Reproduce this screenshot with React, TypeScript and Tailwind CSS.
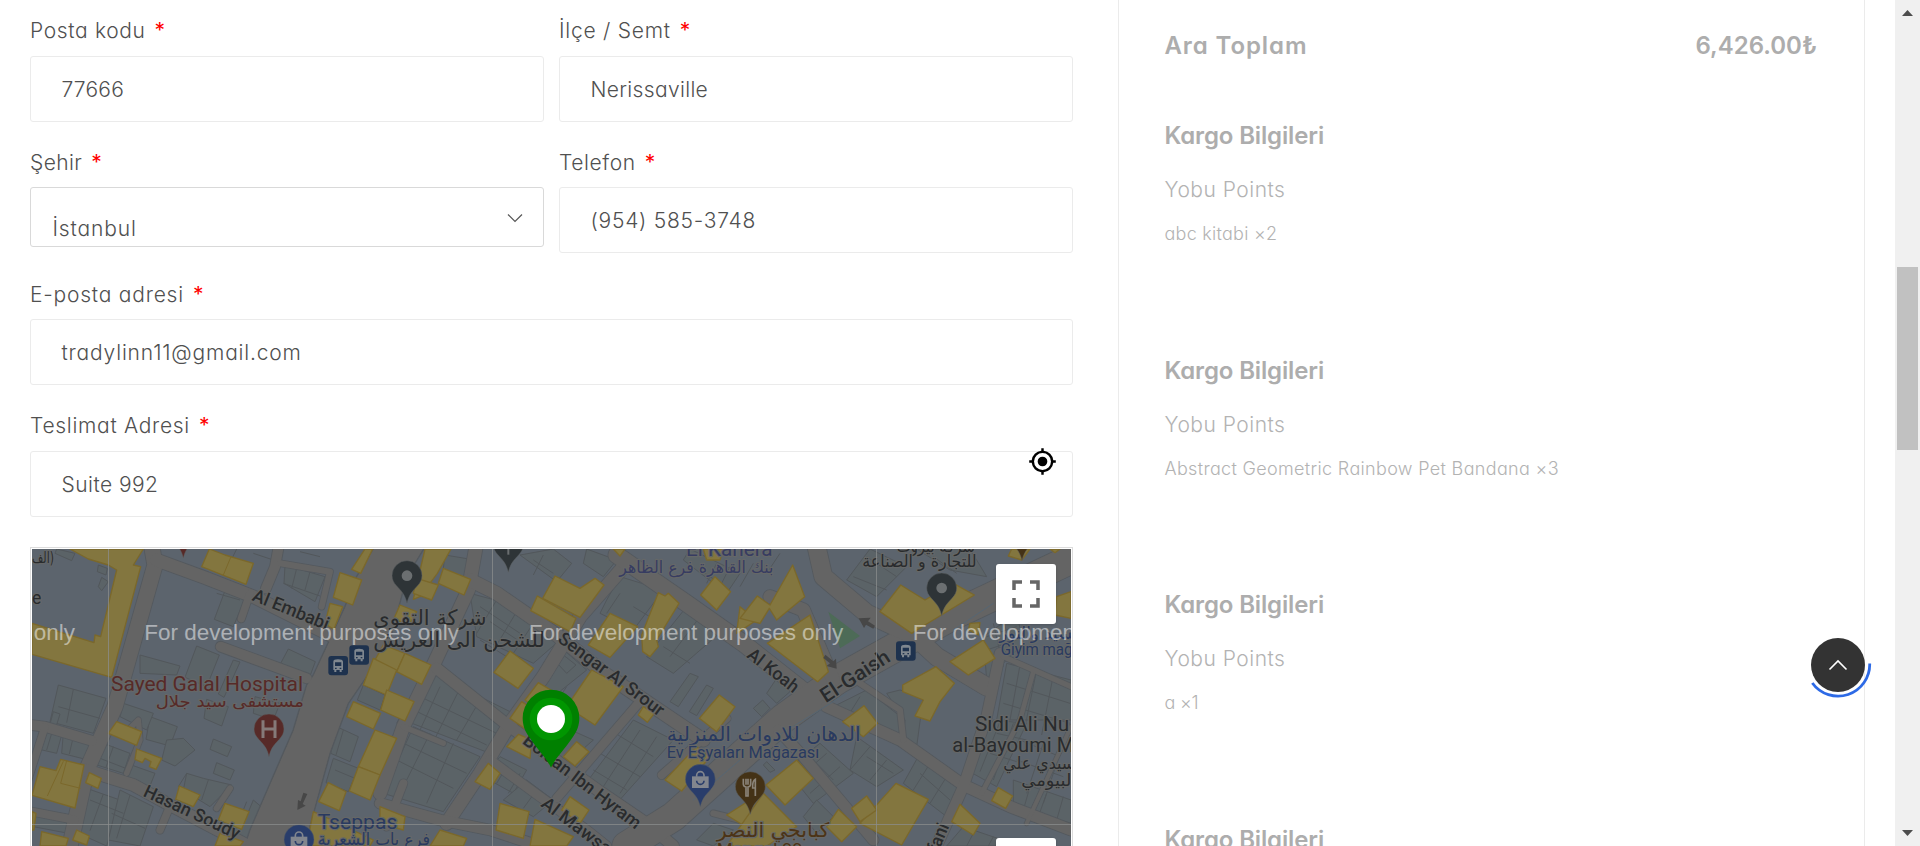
import type { ReactNode } from "react";

function Required() {
  return <span className="ml-[9px] font-normal text-[#ff0000]">*</span>;
}

function Field({ label, labelClass, value, valueClass, select, children }: {
  label: string; labelClass: string; value: string; valueClass: string; select?: boolean; children?: ReactNode;
}) {
  return (
    <div className="flex h-[131.66px] flex-1 flex-col">
      <label className="h-11 shrink-0 whitespace-nowrap pt-[4.5px] leading-[30px]">
        <span className={labelClass}>{label}</span>
        <Required />
      </label>
      {select ? (
        <div className="flex h-[60px] items-center justify-between rounded-[3px] border border-[#d9d9d9] pl-[21.5px] pr-[20px]">
          <span className={"pt-[24px] leading-[30px] " + valueClass}>{value}</span>
          <svg className="mt-0.5 h-3 w-4" viewBox="0 0 16 12" fill="none" stroke="#555" strokeWidth="1.2">
            <path d="M1 2.5 8 9.5 15 2.5" />
          </svg>
        </div>
      ) : (
        <div className="relative flex h-[66px] shrink-0 items-center rounded-[3px] border border-[#ebebeb] pl-[30.5px]">
          <span className={"pt-[2px] leading-[30px] " + valueClass}>{value}</span>
          {children}
        </div>
      )}
    </div>
  );
}

const YELLOW = [
  "150,27 370,27 340,75 362,80 275,412 36,343 36,250 222,308 225,285 242,290 290,90 265,75 205,57",
  "568,27 615,45 700,70 678,133 545,80", "1035,27 1058,27 1022,100 995,88", "960,98 1025,120 998,195 940,172", "930,190 968,200 942,268 915,252",
  "290,545 365,575 350,616 265,580", "350,627 425,655 408,688 388,680 393,665 375,655 367,668 345,658",
  "60,680 108,692 122,658 192,675 165,804 36,766", "208,698 244,715 234,745 197,728", "478,738 540,765 520,800 467,778",
  "615,790 687,815 665,868 595,840", "925,728 978,755 958,812 896,785", "1000,485 1082,520 1060,567 980,530", "1065,570 1130,595 1080,705 1015,680",
  "1015,680 1080,705 1050,780 988,753", "36,815 48,820 42,870 36,870", "65,875 145,895 138,918 60,918", "170,870 208,888 200,915 158,900", "600,880 670,905 660,918 585,918",
  "880,815 935,840 1060,900 1050,918 860,918",
  "1215,27 1293,27 1252,100 1200,170 1180,178", "1270,85 1352,118 1332,165 1255,130", "1190,115 1255,135 1235,180 1180,160", "1140,195 1190,215 1170,250 1120,240",
  "1090,315 1155,340 1130,395 1065,360", "1155,340 1233,375 1205,433 1130,395", "1060,355 1130,390 1100,465 1030,435", "1100,450 1182,485 1155,543 1082,510",
  "1470,333 1540,385 1494,445 1422,397", "1555,428 1610,460 1560,515 1515,480", "1505,485 1560,520 1535,580 1470,535", "1496,583 1535,600 1530,655 1460,620",
  "1605,108 1680,145 1725,115 1752,135 1680,232 1568,175", "1552,168 1668,235 1650,275 1532,212", "1770,220 1853,260 1770,352 1705,315",
  "1915,158 1935,168 1945,160 1977,190 1910,300 1915,320 1890,350 1868,335 1865,285", "1715,390 1810,440 1725,555 1640,500", "1670,605 1707,635 1665,678 1630,650",
  "1870,500 1903,520 1882,547 1855,525", "2098,465 2145,500 2090,575 2038,535", "2085,110 2132,155 2090,210 2042,165", "2160,200 2210,240 2150,280",
  "1440,790 1527,815 1510,895 1428,870", "1545,838 1660,890 1640,918 1530,918", "1650,770 1707,810 1680,850 1625,810", "1405,670 1440,700 1410,748 1365,725",
  "2010,640 2030,620 2070,650 1985,753 1935,720", "2120,825 2190,780 2220,870 2160,918 2240,900", "1080,800 1155,830 1150,870 1080,850", "1260,870 1340,895 1330,918 1230,918", "1780,27 1815,27 1800,48", "2050,27 2110,27 2100,60 2060,60",
  "2318,75 2354,170 2270,240 2248,205 2220,250 2160,235 2212,168 2250,195", "2370,225 2425,395 2393,425 2242,310",
  "2642,135 2715,180 2800,130 2863,165 2715,255 2675,280 2580,215", "2890,300 2925,355 2845,405 2790,365", "2748,380 2803,430 2760,485 2730,543 2685,528 2710,480 2648,455 2648,435",
  "2532,497 2573,550 2530,590 2468,545", "2330,660 2380,715 2295,795 2238,735", "2230,760 2330,860 2240,918 2120,918", "2628,730 2725,778 2645,915 2520,850",
  "2540,768 2570,810 2520,845 2495,805", "2455,808 2510,860 2465,905 2420,860", "2935,743 2978,768 2957,805 2915,782", "2820,793 2880,850 2860,885 2795,845",
  "3110,170 3153,155 3153,235 3105,225", "2975,27 3030,27 3005,60 2965,48", "3090,27 3120,27 3105,38", "2850,250 2880,248 2875,285 2845,270",
];

// Building footprints inside the blocks.
const GREY = [
  "115,435 258,475 220,580 90,545", "100,515 120,522 105,570 88,560", "235,75 262,85 258,105 232,95", "245,112 265,125 245,152 235,140",
  "360,345 480,378 470,405 360,400", "530,318 598,345 560,440 495,412", "640,360 660,366 612,472 595,462", "615,152 675,175 640,260 583,238", "795,75 915,110 885,185 792,130",
  "805,327 886,365 870,408 782,370", "390,530 472,560 450,618 378,598", "440,600 490,595 525,630 465,678 425,660", "580,597 635,620 622,650 570,628", "590,668 643,690 630,720 580,700",
  "310,490 400,520 380,570 300,530", "560,478 625,500 605,558 552,535", "705,470 780,490 760,540 700,520", "320,670 405,700 385,750 310,720", "500,700 550,715 635,735 570,800 490,750",
  "130,580 225,610 205,660 125,640", "60,570 125,585 110,640 45,625", "250,610 330,640 310,700 215,670", "200,745 300,780 260,918 175,880", "300,750 400,800 360,918 265,900", "50,820 150,835 145,880 40,860", "110,27 165,40 155,62 105,40", "950,560 1015,590 990,665 932,640", "940,655 1015,685 985,755 918,728", "1030,435 1095,465 1080,510 1012,480", "700,780 735,810 700,918 650,900",
  "1275,45 1365,60 1370,130 1270,85", "1240,400 1340,450 1500,530 1410,640 1150,540", "1180,560 1380,650 1270,815 1090,760", "1350,160 1500,200 1620,300 1540,370 1370,290", "1500,45 1600,27 1655,70 1610,125", "1700,27 1790,60 1750,110 1690,70",
  "1620,320 1700,390 1600,470 1560,440", "1630,560 1720,600 1640,670 1600,630", "1840,540 1960,600 1790,790 1690,740", "1760,180 1800,110 1930,150 1840,270 1740,220", "2000,200 2110,270 1960,400 1880,350", "2010,400 2035,410 1975,500 1950,485", "2060,435 2080,445 2030,527 2008,515", "1440,650 1520,690 1480,760 1390,710", "1520,720 1600,780 1540,830 1450,780", "2010,27 2160,100 2120,160 1990,60", "1630,345 1668,375 1640,400 1612,370",
  "2270,415 2310,455 2270,490 2240,460", "2228,480 2250,505 2225,530 2200,505", "2480,120 2550,27 2660,80 2570,170", "2690,27 2850,27 2900,110 2790,90", "2440,500 2540,450 2680,560 2640,620", "2600,460 2640,450 2710,470 2690,620 2650,600 2655,540", "2400,610 2500,700 2380,790 2300,690", "2510,590 2650,690 2570,740 2490,690", "2700,640 2830,750 2780,830 2650,730",
  "2960,370 3153,420 3153,540 2930,540", "2920,540 3020,550 2930,740 2840,690", "2980,720 3153,780 3153,850 2980,800", "2890,290 2990,220 3010,310 2900,420", "2240,665 2265,690 2250,697 2230,675", "2830,860 3000,918 2780,918", "2080,850 2140,870 2080,918 2030,900", "2390,780 2440,830 2390,880 2350,830",
];

// Lot dividers, drawn as thin lines across footprints.
const LOTS =
  "M160 590l-12 52M95 580l-15 50M160 448l-20 100M115 500l125 35M240 655l90 35M280 620l-22 62M210 780l100 40M250 762l-40 110M330 765l-40 130M275 820l100 45M790 130l110 38M830 85l-15 60M870 95l-15 55M700 40l60 20M650 27l-15 30M840 35l60 15M590 160l70 20M500 700l-25 40M565 720l-20 60M680 785l-40 100M970 570l-22 75M945 690l60 25" +
  "M1200 420l-70 130M1260 440l-60 130M1320 445l-80 160M1190 465l240 115M1160 500l240 115M1380 480l-70 120M1130 600l210 100M1110 650l190 95M1230 580l-90 180M1300 610l-80 180M1380 200l120 80M1430 180l-60 100M1490 215l-60 100M1540 250l-60 90M1410 245l120 80M1640 440l-40 60M1770 570l130 80M1740 640l120 70M1720 690l100 60M1860 570l-110 170M1910 590l-110 170M1840 200l90 55M1800 160l-40 60M2040 230l-90 120M1930 320l80 50M1460 680l-30 50M1500 700l-35 60M1550 750l-40 55M1620 260l60 60M1290 110l80 35M1540 60l60 40M1570 45l-30 60M2040 90l60 40M2090 70l-30 60M2130 80l-30 60M1380 300l80 50" +
  "M2200 70l-40 70M2240 100l40 -60M2500 110l100 40M2540 50l90 60M2740 50l70 50M2480 520l60 50M2520 470l-50 80M2360 640l80 80M2420 640l-80 70M2460 680l-90 80M2550 620l-60 70M2600 660l-50 60M2540 650l80 50M2730 670l-50 80M2780 710l-50 80M2700 700l90 80M3000 375l-30 165M3050 390l-35 170M3100 405l-35 180M2960 430l190 60M2950 490l200 60M2930 580l90 20M2910 640l80 25M2940 545l-60 150M2980 550l-60 170M3030 740l-20 70M3080 760l-25 70M3130 770l-20 70M3000 600l120 50M2990 660l140 50M3070 610l-50 150M3130 610l-60 180M2920 250l30 130M2950 240l25 90M2900 290l90 -30M2900 330l90 -30M2860 880l-20 38M2920 890l-15 28";

const ROADS: [string, number][] = [
  ["M392 0 405 75 285 500 200 690 150 918", 46], ["M410 60 560 115 700 170 940 290", 38], ["M602 320 860 415", 30], ["M776 20 765 80 738 145", 30],
  ["M690 160 664 236", 22], ["M780 70 930 95 905 200", 18], ["M20 553 75 560 215 602", 30], ["M190 688 340 735 450 795 680 915", 36], ["M75 560 20 730", 22],
  ["M630 745 590 805", 18], ["M445 810 420 870", 22], ["M20 812 165 840", 24], ["M310 585 355 540 360 600 320 700", 16],
  ["M1370 10 1345 150 1240 375 1150 560 1080 760", 40], ["M1350 120 1430 160 1610 285 1760 405 1990 560 2050 600", 40], ["M1820 70 1680 230 1570 410 1470 550 1380 700 1280 850", 40],
  ["M1250 385 1450 545 1600 655 1740 755 1880 850 1960 918", 34], ["M1150 560 1270 610", 16], ["M1410 660 1560 770 1700 870 1760 918", 28], ["M1855 490 1610 775", 26],
  ["M1080 790 1260 840 1410 870 1610 935", 32], ["M1790 45 2000 190 2170 310 2360 460", 50], ["M1150 730 1100 860", 24], ["M2120 535 1925 705", 24],
  ["M1820 918 1960 830 2160 650 2290 535 2450 420 2800 225 3170 50", 86], ["M2385 0 2410 110 2540 220 2680 285 2750 350 2900 440", 54], ["M2250 170 2350 210 2440 420", 40],
  ["M2275 570 2350 650 2560 900", 32], ["M2420 500 2640 600 2830 735 2970 800 3153 870", 34], ["M2940 340 2900 530 2830 740 2740 940", 32], ["M3040 395 3000 540 2885 760", 14], ["M2950 350 3153 440", 16], ["M2520 430 2640 510 2650 600", 18],
  ["M2080 820 2160 840 2240 918", 18], ["M3153 560 3020 850", 12],
];

function MapText({ x, y, w, size, angle = 0, color = "#292b2d", bold, arabic, children }: {
  x: number; y: number; w: number; size: number; angle?: number; color?: string; bold?: boolean; arabic?: boolean; children: string;
}) {
  return (
    <text
      transform={`translate(${x} ${y}) rotate(${angle})`} fontSize={size} textLength={w} lengthAdjust="spacingAndGlyphs"
      fill={color} stroke="#656767" strokeWidth="7" strokeLinejoin="round" paintOrder="stroke" fontWeight={bold ? 500 : 400}
      className={arabic ? "font-['DejaVu_Sans',sans-serif]" : "font-[Roboto,sans-serif]"}
    >
      {children}
    </text>
  );
}

function Pin({ x, y, color, children }: { x: number; y: number; color: string; children?: ReactNode }) {
  return (
    <g transform={`translate(${x} ${y})`}>
      <path d="M0 83C-6 56-18 45-31 31-40 21-45 12-45 0A45 45 0 0 1 45 0C45 12 40 21 31 31 18 45 6 56 0 83Z" fill={color} stroke="#5f6264" strokeWidth="1.5" />
      {children}
    </g>
  );
}

function Bag() {
  return (
    <g>
      <path d="M-25-9H25V26H-25Z" fill="#82868e" />
      <path d="M-11-8V-12A11 11 0 0 1 11-12V-8" fill="none" stroke="#82868e" strokeWidth="5" />
      <path d="M-11 4A11 11 0 0 0 11 4" fill="none" stroke="#293d6b" strokeWidth="5" />
    </g>
  );
}

function Fork() {
  return (
    <path d="M-21-24V-8Q-21-1-13 1V28H-7V1Q1-1 1-8V-24M-13-24V-6M-7-24V-6M15 28V-22Q6-18 7 4H16" fill="none" stroke="#8b8479" strokeWidth="5" />
  );
}

function Bus({ x, y }: { x: number; y: number }) {
  return (
    <g transform={`translate(${x} ${y})`}>
      <rect width="59" height="58" rx="9" fill="#1e324e" />
      <path d="M15 17Q15 10 29 10T44 17V42H40V48H34V42H24V48H18V42H15Z" fill="#7f878f" />
      <path d="M20 19H39V30H20ZM20 35H25V39H20ZM34 35H39V39H34Z" fill="#1e324e" />
    </g>
  );
}

function MapCanvas() {
  return (
    <svg className="block h-[297px] w-[1039px]" viewBox="36 27 3117 891" preserveAspectRatio="none">
      <rect x="36" y="27" width="3117" height="891" fill="#5c646d" />
      <g fill="#5b6367" stroke="#52575b" strokeWidth="3">
        {GREY.map((p) => <polygon key={p} points={p} />)}
        <path d={LOTS} fill="none" />
      </g>
      <g fill="none" strokeLinejoin="round" strokeLinecap="round">
        <path d="M1065 20 1010 110 975 200 880 405 860 435 820 570 690 870 670 930H850L930 640 985 490 1060 380 1110 300 1160 110 1215 20Z" fill="#646464" stroke="#54595e" strokeWidth="5" />
        {ROADS.map(([d, w]) => <path key={d} d={d} stroke="#54595e" strokeWidth={w + 5} />)}
        {ROADS.map(([d, w]) => <path key={d} d={d} stroke="#646464" strokeWidth={w} />)}
        <path d="M1066 20 1012 110 977 200 882 405 862 435 822 570 692 870 672 930H848L928 640 983 490 1058 380 1108 300 1158 110 1213 20Z" fill="#646464" />
        <path d="M2020 780 2160 660M2270 590 2480 460M2800 270 2920 190" stroke="#566673" strokeWidth="3" />
      </g>
      <path d="M2425 215 2520 288 2460 325Z" fill="#4d6b57" />
      <g fill="#83763f" stroke="#7b682b" strokeWidth="4" strokeLinejoin="round">
        {YELLOW.map((p) => <polygon key={p} points={p} />)}
      </g>
      <path d="M140 662 122 730 182 745M130 664 82 768M633 50 610 105" fill="none" stroke="#7b682b" strokeWidth="3" />
      <g fill="#474747">
        <path d="M850 758 862 762 848 792 857 797 832 810 834 780 842 784Z" />
        <path d="M2516 235 2552 233 2544 244 2565 257 2560 266 2538 254 2532 264Z" />
        <path d="M2416 344 2440 364 2448 356 2450 386 2420 378 2430 370 2410 354Z" />
      </g>

      <MapText x={36} y={70} w={66} size={46} arabic>{"\u200f(الف"}</MapText>
      <MapText x={36} y={192} w={28} size={56}>e</MapText>
      <MapText x={694} y={180} w={242} size={54} angle={22} bold>Al Embabi</MapText>
      <MapText x={367} y={767} w={312} size={54} angle={25} bold>Hasan Soudy</MapText>
      <MapText x={273} y={453} w={576} size={63} color="#572a28">Sayed Galal Hospital</MapText>
      <MapText x={407} y={501} w={445} size={48} color="#572a28" arabic>مستشفى سيد جلال</MapText>
      <MapText x={1060} y={255} w={340} size={64} arabic>شركة التقوى</MapText>
      <MapText x={1060} y={320} w={515} size={64} arabic>للشحن الى العريش</MapText>
      <MapText x={893} y={868} w={239} size={63} color="#293a60">Tseppas</MapText>
      <MapText x={893} y={916} w={337} size={50} color="#293a60" arabic>فرع باب الشعرية</MapText>
      <MapText x={1998} y={47} w={260} size={60} color="#373c61">El Kahera</MapText>
      <MapText x={1798} y={99} w={462} size={50} color="#373c61" arabic>بنك القاهرة فرع الظاهر</MapText>
      <MapText x={1610} y={303} w={382} size={54} angle={36.5} bold>Sengar Al Srour</MapText>
      <MapText x={1505} y={608} w={430} size={54} angle={37.5} bold>Boldan Ibn Hyram</MapText>
      <MapText x={1560} y={797} w={248} size={54} angle={37} bold>Al Mawsa</MapText>
      <MapText x={2178} y={350} w={180} size={54} angle={38} bold>Al Koah</MapText>
      <MapText x={2417} y={490} w={236} size={62} angle={-33} bold>El-Gaish</MapText>
      <MapText x={2755} y={940} w={88} size={54} angle={-68} bold>fani</MapText>
      <MapText x={1940} y={602} w={582} size={60} color="#293a60" arabic>الدهان للادوات المنزلية</MapText>
      <MapText x={1940} y={655} w={458} size={48} color="#293a60">Ev Eşyaları Mağazası</MapText>
      <MapText x={2090} y={890} w={338} size={60} color="#4c3417" arabic>كبابجي النصر</MapText>
      <MapText x={2090} y={944} w={258} size={50} color="#4c3417">Mangal 99</MapText>
      <MapText x={2630} y={36} w={235} size={48} arabic>شركة بيروت</MapText>
      <MapText x={2527} y={80} w={343} size={50} arabic>للتجارة و الصناعة</MapText>
      <MapText x={2938} y={296} w={250} size={50} color="#293a60" arabic>السيد والنور</MapText>
      <MapText x={2942} y={345} w={240} size={48} color="#293a60">Giyim mağa</MapText>
      <MapText x={2865} y={573} w={283} size={61}>Sidi Ali Nu</MapText>
      <MapText x={2797} y={635} w={366} size={61}>al-Bayoumi M</MapText>
      <MapText x={2950} y={687} w={215} size={50} arabic>سيدي علي</MapText>
      <MapText x={3004} y={738} w={165} size={50} arabic>البيومي</MapText>

      <Pin x={490} y={-28} color="#572a28" />
      <Pin x={747} y={567} color="#572a28">
        <path d="M-18-26V27M18-26V27M-18 0H18" stroke="#857a79" strokeWidth="9" fill="none" />
      </Pin>
      <Pin x={1161} y={107} color="#2e3437"><circle r="16" fill="#6b6f71" /></Pin>
      <Pin x={1465} y={14} color="#2e3437"><path d="M0 0V30" stroke="#6b6f71" strokeWidth="6" /></Pin>
      <Pin x={2765} y={144} color="#2e3437"><circle r="16" fill="#6b6f71" /></Pin>
      <Pin x={3006} y={-21} color="#443216" />
      <Pin x={2041} y={718} color="#293d6b"><Bag /></Pin>
      <Pin x={837} y={899} color="#293d6b"><Bag /></Pin>
      <Pin x={2191} y={740} color="#443216"><Fork /></Pin>
      <Bus x={925} y={348} />
      <Bus x={988} y={316} />
      <Bus x={2628} y={304} />

      <g stroke="#8b8d8e" strokeWidth="3" strokeOpacity="0.75">
        <path d="M265.5 27V918M1417.5 27V918M2569.5 27V918M36 853.5H3153" />
      </g>
      <g className="font-['Liberation_Sans',sans-serif]" fill="#fff" fillOpacity="0.5" fontSize="66">
        {[-779, 373, 1526, 2678].map((x) => (
          <text key={x} x={x} y="301" textLength="944" lengthAdjust="spacingAndGlyphs">For development purposes only</text>
        ))}
      </g>

      <path d="M1593 683C1580 655 1555 632 1530 595 1515 575 1508 556 1508 534A85 85 0 0 1 1678 534C1678 556 1671 575 1656 595 1631 632 1606 655 1593 683Z" fill="#008000" />
      <circle cx="1593" cy="537" r="64" fill="#009600" />
      <circle cx="1593" cy="537" r="42" fill="#fff" />
    </svg>
  );
}

function Shipment({ item, itemClass }: { item: string; itemClass: string }) {
  return (
    <section className="flex h-[234.5px] shrink-0 flex-col whitespace-nowrap">
      <h3 className="text-[24px] font-semibold leading-[30px] tracking-[-0.15px] text-[#adadad]">Kargo Bilgileri</h3>
      <p className="mt-[24px] text-[21px] font-light leading-[30px] tracking-[0.5px] text-[#b3b3b3]">Yobu Points</p>
      <p className={"mt-[14px] text-[18px] font-light leading-[30px] text-[#b3b3b3] " + itemClass}>{item}</p>
    </section>
  );
}

export default function App() {
  return (
    <div className="relative flex h-[846px] w-full overflow-hidden bg-white font-[Inter,sans-serif] text-[21px] font-light text-[#505050] [font-feature-settings:'cv11']">
      <main className="ml-[30px] mr-[45px] flex w-[1043px] shrink-0 flex-col pt-[11.7px]">
        <div className="flex gap-[15px]">
          <Field label="Posta kodu" labelClass="tracking-[0.65px]" value="77666" valueClass="tracking-[0.2px]" />
          <Field label="İlçe / Semt" labelClass="tracking-[0.75px]" value="Nerissaville" valueClass="tracking-[0.33px]" />
        </div>
        <div className="flex gap-[15px]">
          <Field label="Şehir" labelClass="tracking-[0.4px]" value="İstanbul" valueClass="tracking-[0.85px]" select />
          <Field label="Telefon" labelClass="tracking-[0.6px]" value="(954) 585-3748" valueClass="tracking-[0.75px]" />
        </div>
        <div className="flex">
          <Field label="E-posta adresi" labelClass="tracking-[0.78px]" value="tradylinn11@gmail.com" valueClass="tracking-[0.82px]" />
        </div>
        <div className="flex">
          <Field label="Teslimat Adresi" labelClass="tracking-[0.7px]" value="Suite 992" valueClass="tracking-[0.45px]">
            <svg className="absolute -top-[5px] right-[15px] size-[29px]" viewBox="0 0 24 24" fill="#000">
              <path d="M12 8a4 4 0 1 0 0 8 4 4 0 0 0 0-8zm8.94 3A8.994 8.994 0 0 0 13 3.06V1h-2v2.06A8.994 8.994 0 0 0 3.06 11H1v2h2.06A8.994 8.994 0 0 0 11 20.94V23h2v-2.06A8.994 8.994 0 0 0 20.94 13H23v-2h-2.06zM12 19a7 7 0 1 1 0-14 7 7 0 0 1 0 14z" />
            </svg>
          </Field>
        </div>
        <div className="relative mt-[8.66px] h-[320px] shrink-0 border border-[#dcdcdc] p-px">
          <MapCanvas />
          <button aria-label="Tam ekran" className="absolute right-[16px] top-[16px] flex size-[60px] items-center justify-center rounded-[3px] bg-white shadow-sm">
            <svg className="size-[28px]" viewBox="0 0 28 28" fill="none" stroke="#666" strokeWidth="3.5">
              <path d="M2 10V2H10M18 2H26V10M26 18V26H18M10 26H2V18" />
            </svg>
          </button>
          <div className="absolute right-[16px] top-[290px] h-[30px] w-[60px] rounded-t-[3px] bg-white shadow-sm" />
        </div>
      </main>

      <aside className="flex w-[747px] shrink-0 flex-col border-x border-[#ebebeb] pl-[45.5px] pr-[47px] pt-[31px]">
        <div className="mb-[60px] flex shrink-0 justify-between text-[24px] font-semibold leading-[30px] text-[#adadad]">
          <span className="tracking-[0.9px]">Ara Toplam</span>
          <span>6,426.00₺</span>
        </div>
        <Shipment item="abc kitabi ×2" itemClass="tracking-[0.25px]" />
        <Shipment item="Abstract Geometric Rainbow Pet Bandana ×3" itemClass="tracking-[0.33px]" />
        <Shipment item="a ×1" itemClass="tracking-[-0.2px]" />
        <Shipment item="" itemClass="" />
      </aside>

      <div className="ml-auto flex w-[25px] shrink-0 flex-col items-center bg-[#f0f0f0]">
        <svg className="mt-[10px] h-[6px] w-[11px] shrink-0" viewBox="0 0 11 6" fill="#4d4d4d"><path d="M0 6 5.5 0 11 6Z" /></svg>
        <div className="mt-[251px] h-[183px] w-[21px] shrink-0 bg-[#c1c1c1]" />
        <svg className="mb-[10px] mt-auto h-[6px] w-[11px] shrink-0" viewBox="0 0 11 6" fill="#4d4d4d"><path d="M0 0H11L5.5 6Z" /></svg>
      </div>

      <button aria-label="Yukarı" className="absolute left-[1804px] top-[631px] size-[68px]">
        <svg className="size-[68px]" viewBox="0 0 68 68" fill="none">
          <circle cx="34" cy="34" r="27" fill="#333" />
          <path d="M25.5 38.5 34 30 42.5 38.5" stroke="#fff" strokeWidth="1.6" />
          <path d="M65.7 32.5A31.7 31.7 0 0 1 8.3 52" stroke="#2d6ae6" strokeWidth="2.8" />
        </svg>
      </button>
    </div>
  );
}
